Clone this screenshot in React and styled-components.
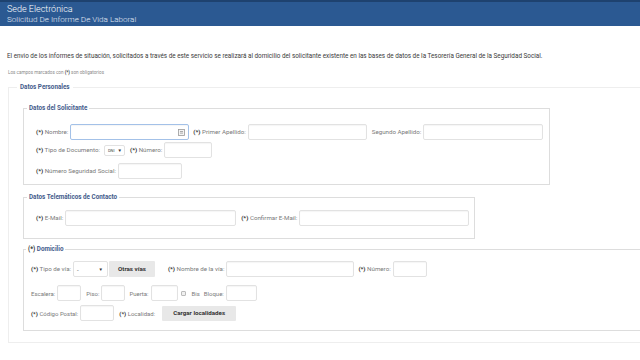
import React from "react";
import styled, { createGlobalStyle } from "styled-components";

const Global = createGlobalStyle`
  html, body { margin: 0; padding: 0; background: #fff; overflow: hidden; }
  body { font-family: Roboto, "Liberation Sans", Arial, sans-serif; color: #333; }
  * { box-sizing: border-box; }
`;

const Page = styled.div`
  width: 640px;
  height: 360px;
  overflow: hidden;
`;

const Header = styled.header`
  height: 26px;
  background: #2b5992;
  border-top: 2px solid #1e426f;
  padding: 0 7px;
  color: #fff;
  display: flex;
  flex-direction: column;
  justify-content: center;
`;

const Title = styled.div`
  font-size: 9px;
  line-height: 10px;
  font-weight: 300;
`;

const Subtitle = styled.div`
  font-size: 8.1px;
  line-height: 10px;
  font-weight: 300;
  color: #e2eaf5;
`;

const Main = styled.main`
  padding: 0 0 0 7px;
`;

const Intro = styled.p`
  margin: 26px 0 0;
  font-size: 6.33px;
  line-height: 8px;
  color: #3a3a3a;
`;

const Note = styled.p`
  margin: 10px 0 0 1px;
  font-size: 4.6px;
  line-height: 6px;
  color: #8a8a8a;
  b { color: #444; font-weight: 700; }
`;

const OuterSet = styled.fieldset`
  margin: 6px 0 0 1px;
  padding: 11px 0 11px 14px;
  border: 1px solid #eee;
  border-right: none;
  min-width: 0;
`;

const Legend = styled.legend`
  font-size: 6.3px;
  line-height: 10px;
  font-weight: 700;
  color: #435b8b;
  padding: 0 ${p => p.$pad ?? 3}px;
  margin-left: ${p => p.$ml || 0}px;
`;

const InnerSet = styled.fieldset`
  margin: ${p => p.$mt || 0}px 0 0 0;
  width: ${p => p.$w ? `${p.$w}px` : "auto"};
  padding: ${p => p.$pt}px 0 ${p => p.$pb}px ${p => p.$pl}px;
  border: 1px solid #ddd;
  ${p => p.$open ? "border-right: none;" : ""}
  min-width: 0;
`;

const Row = styled.div`
  display: flex;
  align-items: center;
  height: 16px;
  margin-top: ${p => p.$mt || 0}px;
`;

const Label = styled.span`
  font-size: ${p => p.$fs || 6.2}px;
  color: #7a7a7a;
  margin-left: ${p => p.$ml || 0}px;
  margin-right: ${p => p.$mr ?? 2}px;
  white-space: nowrap;
`;

const Req = styled.span`
  color: #333;
  font-weight: 700;
`;

const Input = styled.div`
  position: relative;
  width: ${p => p.$w}px;
  height: 16px;
  border: 1px solid ${p => p.$focus ? "#a3c1e8" : "#e2e2e2"};
  border-radius: 2px;
  background: #fff;
  box-shadow: inset 0 1px 1px rgba(0,0,0,0.04);
`;

const CardIcon = styled.svg`
  position: absolute;
  right: 3px;
  top: 4px;
`;

const Select = styled.div`
  width: ${p => p.$w}px;
  height: ${p => p.$h}px;
  border: 1px solid #e2e2e2;
  border-radius: 2px;
  background: #fff;
  display: flex;
  align-items: center;
  justify-content: space-between;
  padding: 0 ${p => p.$pr || 3}px 0 3px;
  font-size: ${p => p.$fs || 6}px;
  color: #444;
`;

const Arrow = styled.span`
  font-size: 4.5px;
  color: #333;
`;

const Button = styled.div`
  height: ${p => p.$h || 16}px;
  padding: 0 ${p => p.$px || 9}px;
  background: #e8e8e8;
  border-radius: 1px;
  display: flex;
  align-items: center;
  font-size: 6.2px;
  font-weight: 700;
  color: #333;
  margin-left: ${p => p.$ml || 0}px;
  white-space: nowrap;
`;

const Check = styled.span`
  width: 5px;
  height: 5px;
  border: 1px solid #bbb;
  border-radius: 1px;
  background: #f0f0f0;
  margin-left: 3px;
  margin-right: 6px;
`;

export default function App() {
  return (
    <Page>
      <Global />
      <Header>
        <Title>Sede Electrónica</Title>
        <Subtitle>Solicitud De Informe De Vida Laboral</Subtitle>
      </Header>
      <Main>
        <Intro>
          El envio de los informes de situación, solicitados a través de este servicio se realizará al domicilio del solicitante existente en las bases de datos de la Tesorería General de la Seguridad Social.
        </Intro>
        <Note>
          Los campos marcados con <b>(*)</b> son obligatorios
        </Note>
        <OuterSet>
          <Legend $ml={-6}>Datos Personales</Legend>
          <InnerSet $w={527} $pt={11} $pb={5} $pl={12}>
            <Legend $pad={2} $ml={-9}>Datos del Solicitante</Legend>
            <Row>
              <Label><Req>(*)</Req> Nombre:</Label>
              <Input $w={119} $focus>
                <CardIcon width="7" height="7" viewBox="0 0 7 7">
                  <rect x="0.5" y="0.5" width="6" height="6" fill="#f4f4f4" stroke="#999" strokeWidth="0.8" />
                  <rect x="2" y="2" width="3" height="0.8" fill="#999" />
                  <rect x="2" y="3.7" width="3" height="0.8" fill="#999" />
                </CardIcon>
              </Input>
              <Label $ml={4}><Req>(*)</Req> Primer Apellido:</Label>
              <Input $w={119} />
              <Label $ml={5}>Segundo Apellido:</Label>
              <Input $w={120} />
            </Row>
            <Row $mt={2}>
              <Label $mr={4}><Req>(*)</Req> Tipo de Documento:</Label>
              <Select $w={21} $h={11} $fs={4} $pr={2}>DNI <Arrow>▼</Arrow></Select>
              <Label $ml={5}><Req>(*)</Req> Número:</Label>
              <Input $w={48} />
            </Row>
            <Row $mt={5}>
              <Label><Req>(*)</Req> Número Seguridad Social:</Label>
              <Input $w={64} />
            </Row>
          </InnerSet>
          <InnerSet $w={452} $mt={7} $pt={8} $pb={12} $pl={12}>
            <Legend $pad={2} $ml={-9}>Datos Telemáticos de Contacto</Legend>
            <Row>
              <Label><Req>(*)</Req> E-Mail:</Label>
              <Input $w={171} />
              <Label $ml={5}><Req>(*)</Req> Confirmar E-Mail:</Label>
              <Input $w={170} />
            </Row>
          </InnerSet>
          <InnerSet $open $mt={5} $pt={7} $pb={9} $pl={7}>
            <Legend $pad={2} $ml={-5}><Req>(*)</Req> Domicilio</Legend>
            <Row>
              <Label><Req>(*)</Req> Tipo de vía:</Label>
              <Select $w={35} $h={16} $fs={6} $pr={4}>- <Arrow>▼</Arrow></Select>
              <Button $ml={1}>Otras vías</Button>
              <Label $ml={13}><Req>(*)</Req> Nombre de la vía:</Label>
              <Input $w={128} />
              <Label $ml={4}><Req>(*)</Req> Número:</Label>
              <Input $w={34} />
            </Row>
            <Row $mt={8}>
              <Label $fs={6}>Escalera:</Label>
              <Input $w={24} />
              <Label $fs={6} $ml={5}>Piso:</Label>
              <Input $w={24} />
              <Label $fs={6} $ml={4}>Puerta:</Label>
              <Input $w={27} />
              <Check />
              <Label $fs={6} $mr={4}>Bis</Label>
              <Label $fs={6}>Bloque:</Label>
              <Input $w={31} />
            </Row>
            <Row $mt={4}>
              <Label $fs={6}><Req>(*)</Req> Código Postal:</Label>
              <Input $w={34} />
              <Label $fs={6} $ml={5}><Req>(*)</Req> Localidad:</Label>
              <Button $ml={5} $h={15} $px={11}>Cargar localidades</Button>
            </Row>
          </InnerSet>
        </OuterSet>
      </Main>
    </Page>
  );
}
